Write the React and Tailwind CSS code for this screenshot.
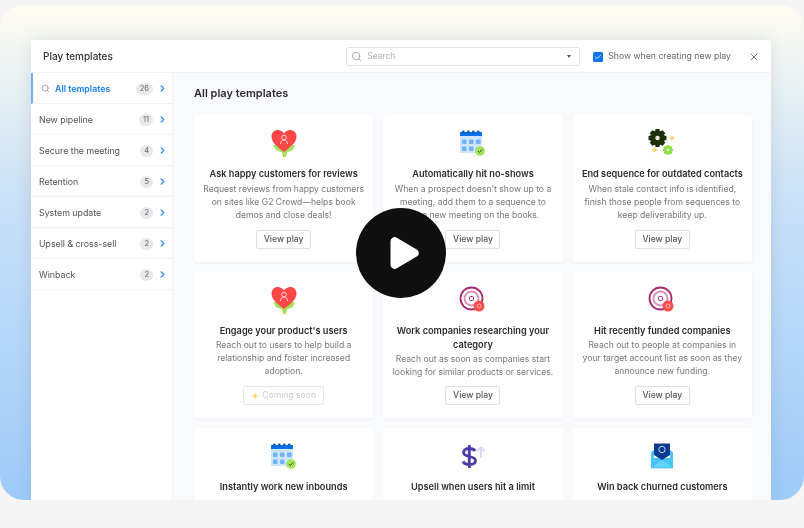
import React from 'react';
import { Search, X, ChevronRight, Check, Play } from 'lucide-react';

const categories = [
  { name: 'All templates', count: 26, active: true },
  { name: 'New pipeline', count: 11 },
  { name: 'Secure the meeting', count: 4 },
  { name: 'Retention', count: 5 },
  { name: 'System update', count: 2 },
  { name: 'Upsell & cross-sell', count: 2 },
  { name: 'Winback', count: 2 },
];

function HeartIcon() {
  return (
    <svg width="28" height="28" viewBox="0 0 28 28">
      <path d="M3 16h6l3 4v-2h4v2l3-4h6l-2 5-5 2h-1l-1 5h-3l-1-5h-1l-5-2z" fill="#a3e25a" />
      <path d="M14 23C8 18 1.500 14 1.500 7.500c0-4 3-6.500 6-6.500 2.700 0 5.200 1.300 6.500 3.500C15.300 2.300 17.800 1 20.500 1c3 0 6 2.500 6 6.500C26.500 14 20 18 14 23z" fill="#ff4747" />
      <circle cx="14" cy="8.500" r="2.300" fill="none" stroke="#ffd9d9" strokeWidth="1" />
      <path d="M10.500 15c0-2.500 1.500-4 3.500-4s3.500 1.500 3.500 4" fill="none" stroke="#ffd9d9" strokeWidth="1" />
    </svg>
  );
}

function CalendarIcon() {
  const cells = [];
  [10.500, 17.500].forEach((y) => {
    [3, 10, 17].forEach((x) => {
      if (!(y === 17.500 && x === 17)) cells.push(<rect key={`${x}-${y}`} x={x} y={y} width="4.500" height="4.500" rx="1" fill="#6fb2fe" />);
    });
  });
  return (
    <svg width="28" height="28" viewBox="0 0 28 28">
      <rect x="1" y="3" width="22" height="21" rx="1" fill="#cfe5ff" />
      <rect x="1" y="3" width="22" height="4" fill="#0b6fe8" />
      {[3, 8, 13, 18].map((x) => (
        <rect key={x} x={x} y="1.500" width="2.500" height="3" rx="1" fill="#0b5cc4" />
      ))}
      {cells}
      <circle cx="21" cy="22" r="4.800" fill="#a3e25a" />
      <path d="M19 22l1.500 1.500 2.500-3" fill="none" stroke="#33591a" strokeWidth="1" />
    </svg>
  );
}

function GearShape({ cx, cy, r, fill, hole }) {
  const teeth = [0, 45, 90, 135];
  return (
    <g>
      {teeth.map((a) => (
        <rect key={a} x={cx - r * 0.3} y={cy - r * 1.2} width={r * 0.6} height={r * 2.4} rx="0.8" fill={fill} transform={`rotate(${a} ${cx} ${cy})`} />
      ))}
      <circle cx={cx} cy={cy} r={r} fill={fill} />
      <circle cx={cx} cy={cy} r={r * 0.3} fill={hole} />
    </g>
  );
}

function GearsIcon() {
  return (
    <svg width="28" height="28" viewBox="0 0 28 28">
      <GearShape cx={9.500} cy={9} r={7.500} fill="#1f3008" hole="#e8e8e0" />
      <GearShape cx={20} cy={21} r={4.200} fill="#8fe04a" hole="#e6f8d0" />
      <path d="M24 6l1 2 2.500 1-2.500 1-1 2-1-2-2.500-1 2.500-1zM6.500 18l1 2 2.500 1-2.500 1-1 2-1-2-2.500-1 2.500-1z" fill="#ffd35c" />
    </svg>
  );
}

function TargetIcon() {
  return (
    <svg width="28" height="28" viewBox="0 0 28 28">
      <circle cx="12.500" cy="12.500" r="11" fill="none" stroke="#a8286f" strokeWidth="1.800" />
      <circle cx="12.500" cy="12.500" r="7" fill="none" stroke="#d98fb8" strokeWidth="1.800" />
      <rect x="10.500" y="10.500" width="4" height="4" rx="1" fill="none" stroke="#a8286f" strokeWidth="1" />
      <circle cx="20" cy="20" r="5.500" fill="#ff4d4d" />
      <circle cx="20" cy="20" r="2" fill="none" stroke="#ffb3b3" strokeWidth="1" />
    </svg>
  );
}

function DollarIcon() {
  return (
    <svg width="28" height="28" viewBox="0 0 28 28">
      <path d="M22 5l4 4.500M22 5l-4 4.500M22 5.500V16" fill="none" stroke="#d8d4fb" strokeWidth="1.800" />
      <path d="M16 9C15 7 12.500 6.500 10 6.500 7 6.500 4.500 8 4.500 10.500c0 5.500 12 2.500 12 8 0 2.500-2.500 4-6 4-3 0-5.500-1-6.500-3M10.300 3v23" fill="none" stroke="#4c3ba8" strokeWidth="2.800" />
    </svg>
  );
}

function MailIcon() {
  return (
    <svg width="28" height="28" viewBox="0 0 28 28">
      <path d="M3 10l3-2v8h16V8l3 2v16H3z" fill="#45c8f8" />
      <path d="M3 26l9-8h4l9 8z" fill="#63d3fb" stroke="#2aa6de" strokeWidth="0.500" />
      <path d="M6 1.500h16v11.500l-8 5-8-5z" fill="#0d3a8c" />
      <circle cx="14" cy="7.500" r="3.200" fill="none" stroke="#bcd6ff" strokeWidth="1" />
    </svg>
  );
}

const plays = [
  { icon: <HeartIcon />, title: 'Ask happy customers for reviews', lines: ['Request reviews from happy customers', 'on sites like G2 Crowd—helps book', 'demos and close deals!'] },
  { icon: <CalendarIcon />, title: 'Automatically hit no-shows', lines: ["When a prospect doesn't show up to a", 'meeting, add them to a sequence to', 'get a new meeting on the books.'] },
  { icon: <GearsIcon />, title: 'End sequence for outdated contacts', lines: ['When stale contact info is identified,', 'finish those people from sequences to', 'keep deliverability up.'] },
  { icon: <HeartIcon />, title: "Engage your product's users", lines: ['Reach out to users to help build a', 'relationship and foster increased', 'adoption.'], soon: true },
  { icon: <TargetIcon />, title: 'Work companies researching your category', lines: ['Reach out as soon as companies start', 'looking for similar products or services.'] },
  { icon: <TargetIcon />, title: 'Hit recently funded companies', lines: ['Reach out to people at companies in', 'your target account list as soon as they', 'announce new funding.'] },
  { icon: <CalendarIcon />, title: 'Instantly work new inbounds', partial: true },
  { icon: <DollarIcon />, title: 'Upsell when users hit a limit', partial: true },
  { icon: <MailIcon />, title: 'Win back churned customers', partial: true },
];

function PlayCard({ play }) {
  // the last row runs under the bottom edge of the window, only its top shows
  if (play.partial) {
    return (
      <div className="bg-white rounded-t-[2px] h-[72px] flex flex-col items-center pt-[14px]">
        <div className="h-[28px] mb-[10px] shrink-0">{play.icon}</div>
        <h3 className="w-[170px] text-center text-[9.2px] leading-[14px] font-semibold text-[#2c2c30]">{play.title}</h3>
      </div>
    );
  }

  return (
    <div className="bg-white rounded-[2px] h-[146.5px] flex flex-col items-center pt-[14px] pb-[13px] shadow-[0_1px_3px_rgba(30,40,70,0.05)]">
      <div className="h-[28px] mb-[10px] shrink-0">{play.icon}</div>
      <h3 className="w-[170px] text-center text-[9.2px] leading-[14px] font-semibold text-[#2c2c30]">{play.title}</h3>
      <p className="text-center text-[8.6px] leading-[13px] text-[#77777c] mt-[1.500px] whitespace-nowrap">
        {play.lines.map((line) => (
          <span key={line} className="block">{line}</span>
        ))}
      </p>
      {play.soon ? (
        <button className="mt-auto h-[19px] w-[81px] flex items-center justify-center gap-[3px] border border-[#e6e6e8] rounded-[2px] text-[8.6px] text-[#c9c9cc]">
          <svg width="8" height="8" viewBox="0 0 8 8">
            <path d="M4 0l1 3 3 1-3 1-1 3-1-3-3-1 3-1z" fill="#ffd77a" />
          </svg>
          Coming soon
        </button>
      ) : (
        <button className="mt-auto h-[19px] w-[55px] border border-[#dfdfe2] rounded-[2px] text-[8.6px] font-medium text-[#55555a]">
          View play
        </button>
      )}
    </div>
  );
}

export default function App() {
  return (
    <div className="relative h-[528px] w-[804px] overflow-hidden bg-[#f5f5f5] pt-[5px] font-['Inter',sans-serif]">
      <div className="h-[495px] rounded-[24px] pl-[31px] pr-[33px] pt-[35px] overflow-hidden bg-linear-to-b from-[#fefcf1] via-[#c9e0f6] via-40% to-[#9ecbfa]">
        <div className="h-[460px] bg-white rounded-t-[2px] flex flex-col overflow-hidden shadow-[0_0_16px_rgba(40,60,90,0.12)] blur-[0.6px]">
          <header className="h-[33px] shrink-0 flex items-center pl-[12px] pr-[11px] pt-[1px] border-b border-[#f0f1f3]">
            <h1 className="text-[10px] font-medium text-[#333338]">Play templates</h1>
            <div className="ml-auto w-[234px] h-[19px] flex items-center border border-[#e2e3e6] rounded-[2px] pl-[4px] pr-[8px]">
              <Search size={11} strokeWidth={1.5} className="text-[#8a8a8f]" />
              <span className="ml-[5px] text-[8.5px] text-[#b0b0b5]">Search</span>
              <span className="ml-auto w-0 h-0 border-x-[2.5px] border-x-transparent border-t-[3px] border-t-[#55555a]" />
            </div>
            <div className="ml-[13px] w-[10px] h-[10px] rounded-[1.5px] bg-[#0b74f1] flex items-center justify-center">
              <Check size={8} strokeWidth={2.5} className="text-white" />
            </div>
            <span className="ml-[5px] text-[8.7px] text-[#66666b] whitespace-nowrap">Show when creating new play</span>
            <X size={12} strokeWidth={1.6} className="ml-[17px] text-[#55555a]" />
          </header>

          <div className="flex flex-1 min-h-0">
            <aside className="w-[142px] shrink-0 border-r border-[#f0f1f3] bg-white">
              {categories.map((cat) => (
                <div
                  key={cat.name}
                  className={`h-[31px] flex items-center border-b border-[#eff0f2] pt-[1px] pr-[4px] pl-[8px] ${cat.active ? 'border-l-2 border-l-[#6db1fb]' : ''}`}
                >
                  {cat.active && <Search size={9} strokeWidth={1.5} className="mr-[5px] text-[#66666b]" />}
                  <span className={`text-[8.8px] whitespace-nowrap ${cat.active ? 'font-semibold text-[#1a82f5]' : 'text-[#505055]'}`}>{cat.name}</span>
                  <span className="ml-auto min-w-[12px] h-[12px] px-[4px] rounded-full bg-[#e9e9eb] text-[7.5px] leading-[12px] text-center text-[#66666b]">{cat.count}</span>
                  <ChevronRight size={11} strokeWidth={2.5} className="ml-[4px] text-[#2f8df5]" />
                </div>
              ))}
            </aside>

            <main className="flex-1 min-w-0 bg-[#f9fafc] pl-[21px] pr-[19px] pt-[13px] overflow-hidden">
              <h2 className="text-[11px] leading-[14px] font-semibold text-[#2c2c30] mb-[15px]">All play templates</h2>
              <div className="grid grid-cols-3 gap-[10px]">
                {plays.map((play) => (
                  <PlayCard key={play.title} play={play} />
                ))}
              </div>
            </main>
          </div>
        </div>
      </div>

      {/* Video play button */}
      <div className="absolute left-[356px] top-[208px] w-[90px] h-[90px] rounded-full bg-[#0f0f0f] flex items-center justify-center">
        <Play size={40} fill="white" strokeWidth={1} className="text-white ml-[4px]" />
      </div>
    </div>
  );
}
